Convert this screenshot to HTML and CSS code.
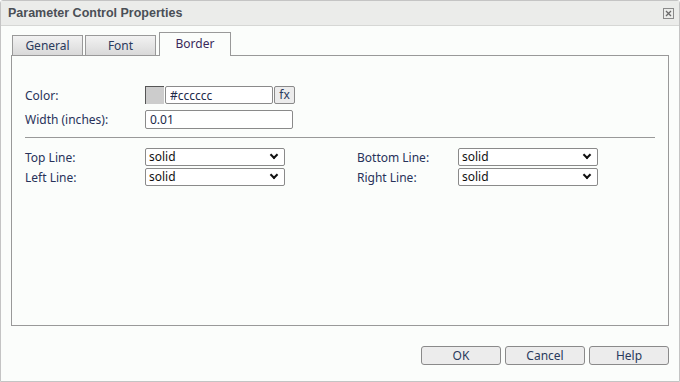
FILE: index.html
```html
<!DOCTYPE html>
<html>
<head>
    <title>Parameter Control Properties</title>
    <link rel="stylesheet" href="styles.css">
</head>
<body>
    <div class="dialog">
        <div class="title-bar">
            <span class="title">Parameter Control Properties</span>
            <button class="close-btn" title="Close">
                <svg width="11" height="11" viewBox="0 0 11 11">
                    <rect x="0.5" y="0.5" width="10" height="10" fill="none" stroke="#8a8a8a"/>
                    <path d="M3 3 L8 8 M8 3 L3 8" stroke="#6a6a6a" stroke-width="1.3"/>
                </svg>
            </button>
        </div>

        <div class="content">
            <div class="tabs">
                <div class="tab">General</div>
                <div class="tab">Font</div>
                <div class="tab active">Border</div>
            </div>

            <div class="panel">
                <div class="row">
                    <label class="label">Color:</label>
                    <span class="swatch"></span>
                    <input class="text-input color-input" type="text" value="#cccccc">
                    <button class="fx-btn">fx</button>
                </div>
                <div class="row tall">
                    <label class="label">Width (inches):</label>
                    <input class="text-input width-input" type="text" value="0.01">
                </div>

                <div class="separator"></div>

                <div class="lines">
                    <div class="line-group">
                        <div class="row tight">
                            <label class="label">Top Line:</label>
                            <div class="select">solid<span class="chevron"></span></div>
                        </div>
                        <div class="row tight">
                            <label class="label">Left Line:</label>
                            <div class="select">solid<span class="chevron"></span></div>
                        </div>
                    </div>
                    <div class="line-group right">
                        <div class="row tight">
                            <label class="label">Bottom Line:</label>
                            <div class="select">solid<span class="chevron"></span></div>
                        </div>
                        <div class="row tight">
                            <label class="label">Right Line:</label>
                            <div class="select">solid<span class="chevron"></span></div>
                        </div>
                    </div>
                </div>
            </div>
        </div>

        <div class="footer">
            <button class="dlg-btn">OK</button>
            <button class="dlg-btn">Cancel</button>
            <button class="dlg-btn">Help</button>
        </div>
    </div>
</body>
</html>
```

FILE: styles.css
```css
* { box-sizing: border-box; }

body {
    margin: 0;
    background: #ffffff;
    font-family: "Noto Sans", "Open Sans", sans-serif;
    font-size: 12px;
    color: #28325a;
}

.dialog {
    width: 680px;
    height: 382px;
    border: 1px solid #c4c4c4;
    border-radius: 3px 3px 0 0;
    background: #fbfdfb;
    display: flex;
    flex-direction: column;
}

.title-bar {
    height: 25px;
    background: #ebecea;
    border-bottom: 1px solid #d6d7d5;
    display: flex;
    align-items: center;
    justify-content: space-between;
    padding: 0 5px 0 7px;
}

.title {
    font-family: "Liberation Sans", Arial, sans-serif;
    font-weight: bold;
    font-size: 12.5px;
    color: #4a4f56;
}

.close-btn {
    border: none;
    background: none;
    padding: 0;
    width: 11px;
    height: 11px;
    display: flex;
}

.content {
    padding: 6px 10px 0 10px;
}

.tabs {
    display: flex;
    align-items: flex-end;
    gap: 2px;
    padding-left: 1px;
    height: 23px;
    position: relative;
    z-index: 1;
}

.tab {
    width: 71px;
    height: 20px;
    border: 1px solid #999;
    border-bottom: none;
    background: linear-gradient(#f2f2f2, #d9d9d9);
    text-align: center;
    line-height: 19px;
    color: #2a3a5c;
}

.tab.active {
    width: 72px;
    height: 24px;
    margin-left: 1px;
    margin-bottom: -1px;
    background: #fbfdfb;
    line-height: 22px;
    color: #3a2a5a;
}

.panel {
    height: 271px;
    border: 1px solid #999;
    padding: 30px 13px 0 13px;
}

.row {
    display: flex;
    align-items: center;
    height: 18px;
    margin-bottom: 6px;
}

.row.tall {
    height: 19px;
}

.row.tight {
    margin-bottom: 2px;
}

.label {
    width: 120px;
    flex-shrink: 0;
}

.swatch {
    width: 19px;
    height: 18px;
    background: #cccccc;
    border-top: 1px solid #555;
    border-left: 1px solid #555;
}

.text-input {
    font-family: inherit;
    font-size: 12px;
    color: #1d2a4a;
    background: #fff;
    border: 1px solid #8a8a8a;
    border-radius: 2px;
    padding: 0 4px;
    outline: none;
}

.color-input {
    width: 108px;
    height: 18px;
    margin-left: 1px;
}

.width-input {
    width: 148px;
    height: 19px;
}

.fx-btn {
    width: 21px;
    height: 18px;
    margin-left: 1px;
    padding: 0;
    font-family: inherit;
    font-size: 12px;
    color: #2a3a5c;
    background: #ececec;
    border: 1px solid #8a8a8a;
    border-radius: 2px;
    line-height: 14px;
}

.separator {
    height: 1px;
    background: #999;
    margin: 8px 0 10px 0;
}

.lines {
    display: flex;
}

.line-group {
    width: 332px;
    flex-shrink: 0;
}

.line-group.right {
    width: auto;
}

.line-group.right .label {
    width: 101px;
}

.select {
    width: 140px;
    height: 18px;
    border: 1px solid #8a8a8a;
    border-radius: 2px;
    background: #fff;
    color: #111;
    padding: 0 3px;
    display: flex;
    align-items: center;
    justify-content: space-between;
    line-height: 16px;
}

.chevron {
    width: 6px;
    height: 6px;
    border-right: 2px solid #111;
    border-bottom: 2px solid #111;
    transform: rotate(45deg);
    margin: -4px 4px 0 0;
}

.footer {
    display: flex;
    justify-content: flex-end;
    gap: 4px;
    padding: 20px 10px 0 0;
}

.dlg-btn {
    width: 80px;
    height: 19px;
    padding: 0;
    font-family: inherit;
    font-size: 12px;
    color: #2a3a5c;
    background: #ececec;
    border: 1px solid #8a8a8a;
    border-radius: 3px;
}
```
